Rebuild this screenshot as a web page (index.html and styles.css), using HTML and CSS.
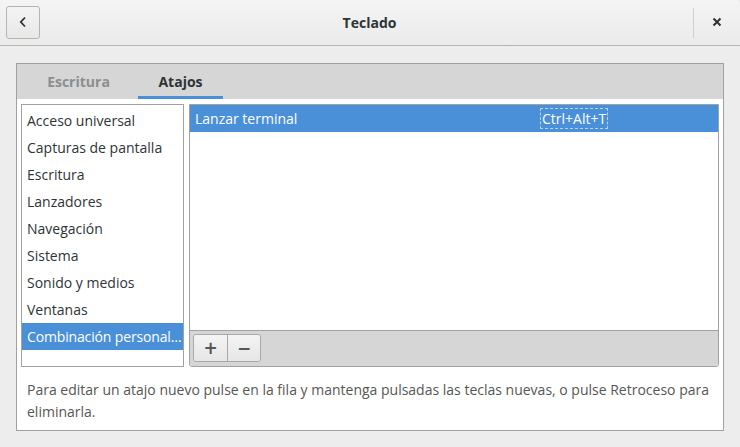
FILE: index.html
```html
<!DOCTYPE html>
<html lang="es">
<head>
    <meta charset="UTF-8">
    <meta name="viewport" content="width=device-width, initial-scale=1.0">
    <title>Teclado</title>
    <link rel="stylesheet" href="styles.css">
</head>
<body>
    <div class="window">
        <header class="headerbar">
            <button class="back-btn" aria-label="Atrás">
                <svg width="10" height="14" viewBox="0 0 10 14"><path d="M7 2.5 L2.8 7 L7 11.5" fill="none" stroke="#2e3436" stroke-width="1.8"/></svg>
            </button>
            <h1 class="title">Teclado</h1>
            <div class="header-end">
                <span class="sep"></span>
                <button class="close-btn" aria-label="Cerrar">
                    <svg width="10" height="10" viewBox="0 0 10 10"><path d="M1.5 1.5 L8.5 8.5 M8.5 1.5 L1.5 8.5" stroke="#2e3436" stroke-width="2"/></svg>
                </button>
            </div>
        </header>

        <main class="content">
            <div class="notebook">
                <div class="tabs">
                    <div class="tab">Escritura</div>
                    <div class="tab active">Atajos</div>
                </div>

                <div class="page">
                    <div class="panes">
                        <ul class="section-list">
                            <li>Acceso universal</li>
                            <li>Capturas de pantalla</li>
                            <li>Escritura</li>
                            <li>Lanzadores</li>
                            <li>Navegación</li>
                            <li>Sistema</li>
                            <li>Sonido y medios</li>
                            <li>Ventanas</li>
                            <li class="selected">Combinación personal…</li>
                        </ul>

                        <div class="shortcut-pane">
                            <div class="shortcut-list">
                                <div class="shortcut-row selected">
                                    <span class="shortcut-name">Lanzar terminal</span>
                                    <span class="shortcut-accel">Ctrl+Alt+T</span>
                                </div>
                            </div>
                            <div class="toolbar">
                                <div class="btn-group">
                                    <button class="tool-btn">+</button>
                                    <button class="tool-btn">&minus;</button>
                                </div>
                            </div>
                        </div>
                    </div>

                    <p class="hint">Para editar un atajo nuevo pulse en la fila y mantenga pulsadas las teclas nuevas, o pulse Retroceso para eliminarla.</p>
                </div>
            </div>
        </main>
    </div>
</body>
</html>
```

FILE: styles.css
```css
:root {
    --window-bg: #ededed;
    --border: #a1a1a1;
    --dark-text: #2e3436;
    --dim-text: #555753;
    --selected: #4a90d9;
}

* {
    box-sizing: border-box;
}

body {
    margin: 0;
    font-family: 'Open Sans', 'DejaVu Sans', sans-serif;
    font-size: 14px;
    color: var(--dark-text);
    background: var(--window-bg);
}

.window {
    width: 740px;
    height: 447px;
    background: var(--window-bg);
    border-top-right-radius: 6px;
    overflow: hidden;
}

.headerbar {
    height: 46px;
    display: flex;
    align-items: center;
    padding: 0 0 0 6px;
    background: linear-gradient(#f4f4f4, #ebebeb);
    border-bottom: 1px solid #b6b6b3;
}

.back-btn {
    width: 34px;
    height: 33px;
    display: flex;
    align-items: center;
    justify-content: center;
    margin-top: -1px;
    background: linear-gradient(#f4f4f4, #e8e8e7);
    border: 1px solid #b4b4b4;
    border-radius: 3px;
    padding: 0;
}

.title {
    flex: 1;
    margin: 0;
    text-align: center;
    font-size: 14px;
    font-weight: bold;
    padding-left: 6px;
}

.header-end {
    display: flex;
    align-items: center;
    height: 100%;
}

.sep {
    width: 1px;
    height: 30px;
    background: #cfcfcd;
}

.close-btn {
    width: 46px;
    height: 46px;
    display: flex;
    align-items: center;
    justify-content: center;
    background: none;
    border: none;
    padding: 0 0 1px 0;
}

.content {
    padding: 17px 16px 16px 16px;
}

.notebook {
    height: 368px;
    border: 1px solid var(--border);
    background: white;
    display: flex;
    flex-direction: column;
}

.tabs {
    height: 35px;
    background: #d6d6d6;
    display: flex;
    padding-left: 19px;
}

.tab {
    width: 85px;
    display: flex;
    align-items: center;
    justify-content: center;
    font-weight: bold;
    color: #8b8e8f;
    border-bottom: 3px solid transparent;
    padding-top: 3px;
}

.tab.active {
    color: var(--dark-text);
    border-bottom-color: var(--selected);
    margin-left: 17px;
}

.page {
    flex: 1;
    padding: 5px 4px 0 4px;
}

.panes {
    display: flex;
    gap: 5px;
    height: 263px;
}

.section-list {
    width: 163px;
    margin: 0;
    padding: 2px 0 0 0;
    list-style: none;
    border: 1px solid var(--border);
}

.section-list li {
    height: 27px;
    line-height: 27px;
    padding-left: 5px;
    white-space: nowrap;
    overflow: hidden;
}

.section-list li.selected {
    letter-spacing: -0.15px;
}

.section-list li.selected,
.shortcut-row.selected {
    background: var(--selected);
    color: white;
}

.shortcut-pane {
    flex: 1;
    display: flex;
    flex-direction: column;
    border: 1px solid var(--border);
    border-radius: 0 0 3px 3px;
}

.shortcut-list {
    flex: 1;
    background: white;
}

.shortcut-row {
    height: 27px;
    display: flex;
    align-items: center;
    padding-left: 5px;
}

.shortcut-name {
    width: 346px;
}

.shortcut-accel {
    padding: 0 1px;
    outline: 1px dashed rgba(255, 255, 255, 0.6);
    outline-offset: 0;
}

.toolbar {
    height: 36px;
    background: #d6d6d6;
    border-top: 1px solid var(--border);
    border-radius: 0 0 3px 3px;
    padding: 3px 3px;
}

.btn-group {
    display: inline-flex;
    border: 1px solid #a8a8a8;
    border-radius: 3px;
    overflow: hidden;
}

.tool-btn {
    width: 33px;
    height: 26px;
    border: none;
    background: linear-gradient(#f4f4f4, #e6e6e6);
    font-family: 'DejaVu Sans', sans-serif;
    font-size: 17px;
    font-weight: bold;
    color: #555753;
    padding: 0;
    line-height: 26px;
}

.tool-btn + .tool-btn {
    border-left: 1px solid #a8a8a8;
}

.hint {
    margin: 12px 0 0 6px;
    color: var(--dim-text);
    line-height: 22px;
    padding-right: 4px;
}
```
